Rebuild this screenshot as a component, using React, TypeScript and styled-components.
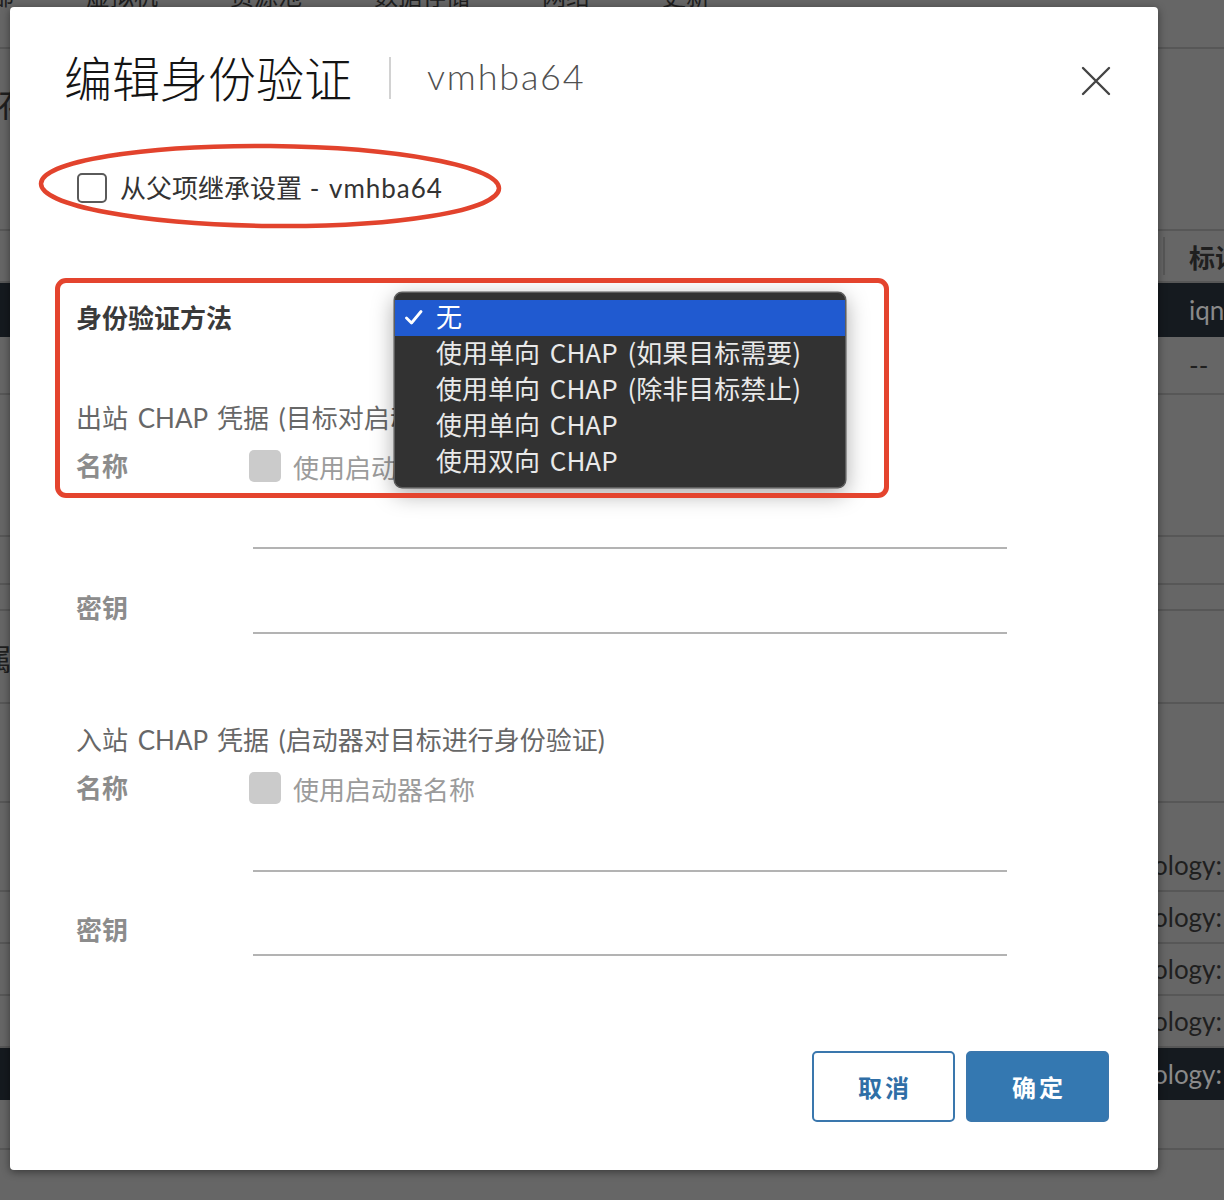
import React from "react";
import styled, { createGlobalStyle } from "styled-components";

const GlobalStyle = createGlobalStyle`
  html, body { margin: 0; padding: 0; }
  body {
    width: 1224px;
    height: 1200px;
    overflow: hidden;
    background: #666;
    font-family: Lato, "Noto Sans CJK SC", sans-serif;
  }
`;

const Screen = styled.div`
  position: relative;
  width: 1224px;
  height: 1200px;
  overflow: hidden;
  background: #666;
`;

/* ---------- dimmed page behind the dialog ---------- */
const BgPage = styled.div`
  display: flex;
  flex-direction: column;
  color: #1f1f1f;
  font-size: 26px;
`;

const TabBar = styled.div`
  height: 49px;
  box-sizing: border-box;
  border-bottom: 2px solid #575757;
  display: flex;
  gap: 72px;
  margin-left: -10px;
  overflow: hidden;
`;

const TabLabel = styled.span`
  font-family: "Noto Sans CJK SC", sans-serif;
  font-size: 24px;
  line-height: 24px;
  margin-top: -17px;
  white-space: nowrap;
`;

const BgHeading = styled.div`
  height: 182px;
  box-sizing: border-box;
  border-bottom: 2px solid #575757;
  padding-top: 35px;
  font-family: "Noto Sans CJK SC", sans-serif;
  font-size: 34px;
  line-height: 38px;
  margin-left: -2px;
  white-space: nowrap;
`;

const BgRow = styled.div<{ $h: number; $dark?: boolean; $line?: boolean }>`
  height: ${(p) => p.$h}px;
  box-sizing: border-box;
  border-bottom: ${(p) => (p.$line ? "2px solid #575757" : "none")};
  background: ${(p) => (p.$dark ? "#151a1f" : "transparent")};
  display: flex;
  align-items: center;
  justify-content: space-between;
  overflow: hidden;
`;

const BgLeftCell = styled.span`
  font-family: "Noto Sans CJK SC", sans-serif;
  font-size: 30px;
  margin-left: -18px;
  white-space: nowrap;
`;

const BgRightCell = styled.span<{ $end?: boolean; $muted?: boolean; $bold?: boolean; $divider?: boolean }>`
  width: ${(p) => (p.$end ? "74px" : "61px")};
  height: 38px;
  box-sizing: border-box;
  display: flex;
  align-items: center;
  justify-content: ${(p) => (p.$end ? "flex-end" : "flex-start")};
  padding-left: ${(p) => (p.$end ? "0" : "24px")};
  padding-right: ${(p) => (p.$end ? "2px" : "0")};
  border-left: ${(p) => (p.$divider ? "2px solid #575757" : "2px solid transparent")};
  overflow: hidden;
  white-space: nowrap;
  color: ${(p) => (p.$muted ? "#8a8a8a" : "#1f1f1f")};
  font-weight: ${(p) => (p.$bold ? 700 : 400)};
  font-size: 26px;
`;

/* ---------- dialog ---------- */
const Modal = styled.div`
  position: absolute;
  left: 10px;
  top: 7px;
  width: 1148px;
  height: 1163px;
  box-sizing: border-box;
  background: #fff;
  border-radius: 4px;
  box-shadow: 0 2px 9px rgba(0, 0, 0, 0.45);
  display: flex;
  flex-direction: column;
`;

const Header = styled.div`
  height: 142px;
  flex: none;
  display: flex;
  align-items: center;
  padding: 0 47px 0 54px;
`;

const Title = styled.h1`
  margin: 0 0 5px;
  font-family: "Noto Sans CJK SC", sans-serif;
  font-size: 48px;
  font-weight: 300;
  line-height: 1;
  color: #141414;
`;

const TitleDivider = styled.span`
  width: 2px;
  height: 42px;
  background: #d2d2d2;
  margin: 0 36px 0 37px;
`;

const Subtitle = styled.span`
  margin-bottom: 4px;
  font-family: Lato, "Noto Sans CJK SC", sans-serif;
  font-size: 36px;
  font-weight: 300;
  letter-spacing: 1.8px;
  color: #505050;
`;

const CloseButton = styled.button`
  margin-left: auto;
  margin-top: 6px;
  width: 30px;
  height: 30px;
  padding: 0;
  border: 0;
  background: none;
  display: flex;
  align-items: center;
  justify-content: center;
`;

const Body = styled.div`
  flex: 1;
  position: relative;
  display: flex;
  flex-direction: column;
  padding: 0 49px 0 66px;
  font-family: Lato, "Noto Sans CJK SC", sans-serif;
  font-size: 26px;
  word-spacing: 3px;
`;

const InheritRow = styled.label`
  margin-top: 24px;
  height: 30px;
  display: flex;
  align-items: center;
  gap: 13px;
  color: #333;
`;

const InheritText = styled.span`
  padding-bottom: 4px;
  word-spacing: 1px;
`;

const Latin = styled.span`
  letter-spacing: 1px;
`;

const CheckBox = styled.span`
  width: 30px;
  height: 30px;
  box-sizing: border-box;
  border: 2px solid #5a5a5a;
  border-radius: 5px;
  margin-left: 1px;
`;

const AuthRow = styled.div`
  position: relative;
  margin-top: 95px;
  height: 36px;
  display: flex;
  align-items: center;
`;

const AuthLabel = styled.span`
  font-weight: 700;
  color: #3a3a3a;
`;

const SectionTitle = styled.div<{ $gap: number }>`
  margin-top: ${(p) => p.$gap}px;
  line-height: 36px;
  color: #676767;
  white-space: nowrap;
`;

const NameRow = styled.div`
  margin-top: 12px;
  height: 36px;
  display: flex;
  align-items: center;
`;

const FieldLabel = styled.span`
  width: 173px;
  flex: none;
  font-weight: 700;
  color: #8c8c8c;
  line-height: 32px;
`;

const DisabledBox = styled.span`
  width: 32px;
  height: 32px;
  border-radius: 5px;
  background: #cbcbcb;
  margin-right: 12px;
`;

const DisabledText = styled.span`
  color: #9b9b9b;
  white-space: nowrap;
`;

const LineInput = styled.input<{ $indent?: boolean }>`
  display: block;
  width: 754px;
  height: 42px;
  box-sizing: border-box;
  margin: 0 0 0 ${(p) => (p.$indent ? "177px" : "4px")};
  padding: 0;
  border: 0;
  border-bottom: 2px solid #b3b3b3;
  background: transparent;
  outline: none;
`;

const InputRow = styled.div<{ $gap: number }>`
  margin-top: ${(p) => p.$gap}px;
  display: flex;
  align-items: flex-start;
`;

const Footer = styled.div`
  margin-top: auto;
  padding: 0 49px 48px 0;
  display: flex;
  justify-content: flex-end;
  gap: 11px;
`;

const Button = styled.button<{ $primary?: boolean }>`
  width: 143px;
  height: 71px;
  box-sizing: border-box;
  border-radius: 5px;
  border: 2px solid #3a77ad;
  background: ${(p) => (p.$primary ? "#3478b1" : "#fff")};
  color: ${(p) => (p.$primary ? "#fff" : "#2f6ea6")};
  font-family: "Noto Sans CJK SC", sans-serif;
  font-size: 24px;
  font-weight: 700;
  letter-spacing: 3px;
  padding: 0 0 0 3px;
`;

/* ---------- native select popup ---------- */
const Menu = styled.ul`
  position: absolute;
  left: 318px;
  top: -6px;
  z-index: 2;
  width: 452px;
  margin: 0;
  padding: 7px 0 7px;
  box-sizing: border-box;
  list-style: none;
  background: #323232;
  border: 1px solid #5e5e5e;
  border-radius: 8px;
  box-shadow: 0 6px 22px rgba(0, 0, 0, 0.35), 0 0 0 0.5px rgba(0, 0, 0, 0.6);
  font-family: "Noto Sans CJK SC", sans-serif;
  font-size: 26px;
  word-spacing: 4px;
`;

const MenuItem = styled.li<{ $selected?: boolean }>`
  position: relative;
  height: 36px;
  box-sizing: border-box;
  padding: 0 0 5px 41px;
  display: flex;
  align-items: center;
  white-space: nowrap;
  color: ${(p) => (p.$selected ? "#fff" : "#e9e9e9")};
  background: ${(p) => (p.$selected ? "#205ad0" : "transparent")};
`;

const CheckMark = styled.svg`
  position: absolute;
  left: 10px;
  top: 10px;
`;

/* ---------- screenshot annotations ---------- */
const MarkEllipse = styled.svg`
  position: absolute;
  left: 28px;
  top: -7px;
  z-index: 3;
  pointer-events: none;
`;

const MarkRect = styled.div`
  position: absolute;
  left: 45px;
  top: 129px;
  width: 834px;
  height: 220px;
  box-sizing: border-box;
  border: 5px solid #e4442e;
  border-radius: 11px;
  z-index: 3;
  pointer-events: none;
`;

const tabs = ["部", "虚拟机", "资源池", "数据存储", "网络", "更新"];

const options = [
  "无",
  "使用单向 CHAP (如果目标需要)",
  "使用单向 CHAP (除非目标禁止)",
  "使用单向 CHAP",
  "使用双向 CHAP",
];

export default function App() {
  return (
    <Screen>
      <GlobalStyle />
      <BgPage>
        <TabBar>
          {tabs.map((t) => (
            <TabLabel key={t}>{t}</TabLabel>
          ))}
        </TabBar>
        <BgHeading>存储适配器</BgHeading>
        <BgRow $h={52} $line>
          <span />
          <BgRightCell $bold $divider>标识符</BgRightCell>
        </BgRow>
        <BgRow $h={54} $dark>
          <span />
          <BgRightCell $muted>iqn.1998-01</BgRightCell>
        </BgRow>
        <BgRow $h={58} $line>
          <span />
          <BgRightCell>--</BgRightCell>
        </BgRow>
        <BgRow $h={142} $line />
        <BgRow $h={48} $line />
        <BgRow $h={26} $line />
        <BgRow $h={93} $line>
          <BgLeftCell>属性</BgLeftCell>
        </BgRow>
        <BgRow $h={99} $line />
        <BgRow $h={37} />
        <BgRow $h={52} $line>
          <span />
          <BgRightCell $end>technology:</BgRightCell>
        </BgRow>
        <BgRow $h={52} $line>
          <span />
          <BgRightCell $end>technology:</BgRightCell>
        </BgRow>
        <BgRow $h={52} $line>
          <span />
          <BgRightCell $end>technology:</BgRightCell>
        </BgRow>
        <BgRow $h={52} $line>
          <span />
          <BgRightCell $end>technology:</BgRightCell>
        </BgRow>
        <BgRow $h={52} $dark>
          <span />
          <BgRightCell $end $muted>technology:</BgRightCell>
        </BgRow>
        <BgRow $h={50} $line />
      </BgPage>

      <Modal>
        <Header>
          <Title>编辑身份验证</Title>
          <TitleDivider />
          <Subtitle>vmhba64</Subtitle>
          <CloseButton aria-label="关闭">
            <svg width="30" height="30" viewBox="0 0 30 30">
              <path d="M2 2 L28 28 M28 2 L2 28" stroke="#444" strokeWidth="2.4" strokeLinecap="round" />
            </svg>
          </CloseButton>
        </Header>

        <Body>
          <MarkEllipse width="464" height="90" viewBox="0 0 464 90">
            <ellipse cx="232" cy="44" rx="229" ry="40" fill="none" stroke="#e2432d" strokeWidth="4.5" transform="rotate(0.6 232 44)" />
          </MarkEllipse>
          <MarkRect />

          <InheritRow>
            <CheckBox />
            <InheritText>
              从父项继承设置 <Latin>- vmhba64</Latin>
            </InheritText>
          </InheritRow>

          <AuthRow>
            <AuthLabel>身份验证方法</AuthLabel>
            <Menu>
              {options.map((o, i) => (
                <MenuItem key={o} $selected={i === 0}>
                  {i === 0 && (
                    <CheckMark width="18" height="15" viewBox="0 0 18 15">
                      <path d="M1.5 8 L6.5 13 L16 1.5" fill="none" stroke="#fff" strokeWidth="2.8" strokeLinecap="round" strokeLinejoin="round" />
                    </CheckMark>
                  )}
                  {o}
                </MenuItem>
              ))}
            </Menu>
          </AuthRow>

          <SectionTitle $gap={66}>出站 CHAP 凭据 (目标对启动器进行身份验证)</SectionTitle>
          <NameRow>
            <FieldLabel>名称</FieldLabel>
            <DisabledBox />
            <DisabledText>使用启动器名称</DisabledText>
          </NameRow>
          <InputRow $gap={23}>
            <LineInput $indent disabled />
          </InputRow>
          <InputRow $gap={43}>
            <FieldLabel>密钥</FieldLabel>
            <LineInput type="password" disabled />
          </InputRow>

          <SectionTitle $gap={88}>入站 CHAP 凭据 (启动器对目标进行身份验证)</SectionTitle>
          <NameRow>
            <FieldLabel>名称</FieldLabel>
            <DisabledBox />
            <DisabledText>使用启动器名称</DisabledText>
          </NameRow>
          <InputRow $gap={24}>
            <LineInput $indent disabled />
          </InputRow>
          <InputRow $gap={42}>
            <FieldLabel>密钥</FieldLabel>
            <LineInput type="password" disabled />
          </InputRow>
        </Body>

        <Footer>
          <Button>取消</Button>
          <Button $primary>确定</Button>
        </Footer>
      </Modal>
    </Screen>
  );
}
